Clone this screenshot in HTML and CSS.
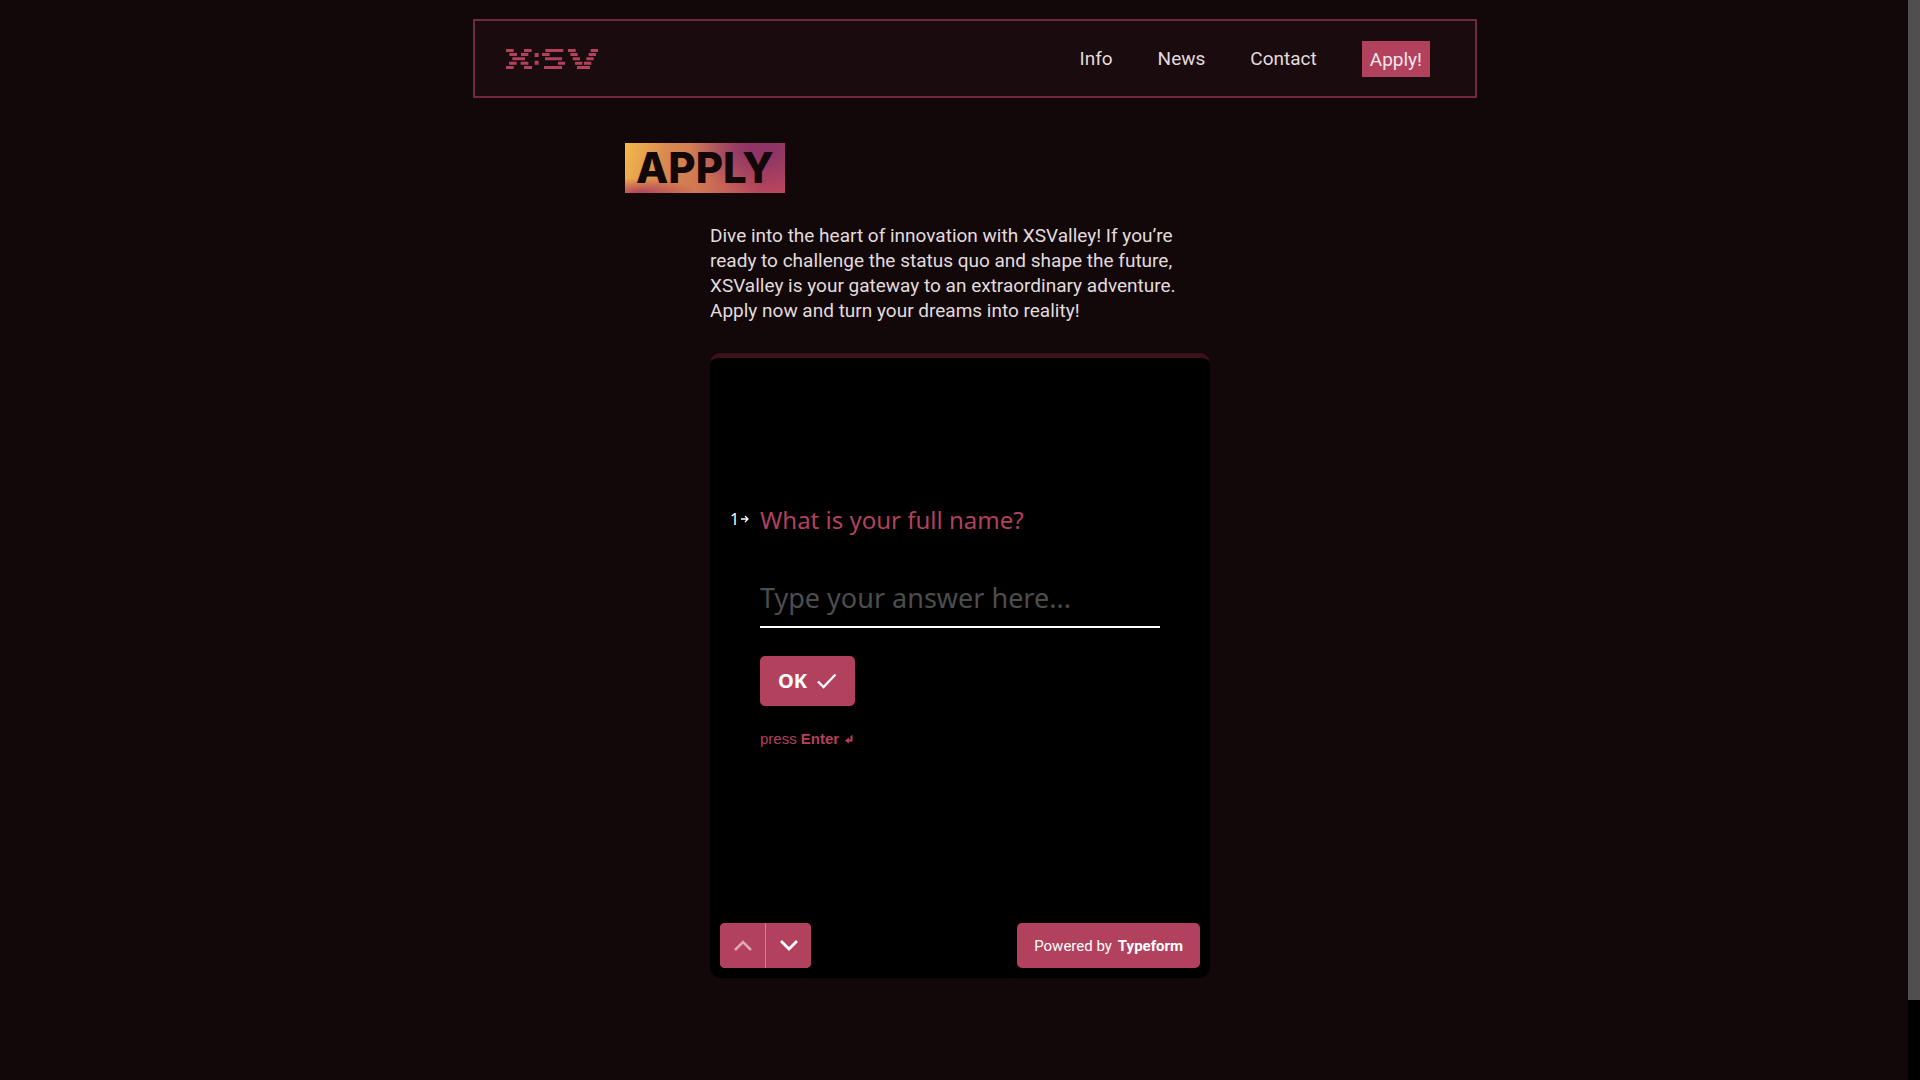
FILE: index.html
```html
<!DOCTYPE html>
<html lang="en">
<head>
<meta charset="utf-8">
<meta name="viewport" content="width=device-width, initial-scale=1">
<title>XSValley – Apply</title>
<link rel="stylesheet" href="styles.css">
</head>
<body>
<header class="site-header">
  <a class="logo" href="#" aria-label="XSValley home">
    <svg viewBox="0 0 276 60" width="92" height="20" fill="currentColor" aria-hidden="true">
      <path d="M0 0h23v9H0zM54 0h23v9H54zM10 12h23v9H10zM45 12h22v9H45zM19 25h38v9H19zM9 38h23v9H9zM44 38h23v9H44zM0 51h23v9H0zM54 51h24v9H54z"/>
      <path d="M86 12h12v12H86zM86 35h12v12H86z"/>
      <path d="M118 0h54v9h-54zM108 12h23v9h-23zM117 25h51v9h-51zM156 38h21v9h-21zM114 51h54v9h-54z"/>
      <path d="M186 0h23v9h-23zM254 0h22v9h-22zM193 12h22v9h-22zM248 12h22v9h-22zM200 25h22v9h-22zM241 25h22v9h-22zM207 38h22v9h-22zM234 38h22v9h-22zM213 51h39v9h-39z"/>
    </svg>
  </a>
  <nav class="nav">
    <a href="#info">Info</a>
    <a href="#news">News</a>
    <a href="#contact">Contact</a>
    <a class="nav-apply" href="#apply">Apply!</a>
  </nav>
</header>
<main class="content">
  <h1 class="title">APPLY</h1>
  <p class="intro">Dive into the heart of innovation with XSValley! If you’re<br>ready to challenge the status quo and shape the future,<br>XSValley is your gateway to an extraordinary adventure.<br>Apply now and turn your dreams into reality!</p>
  <form class="form-card">
    <div class="question">
      <div class="number">1<svg viewBox="0 0 8 8" width="8" height="8" fill="none" stroke="currentColor" stroke-width="1.3" aria-hidden="true"><path d="M0 4h7M4 1l3 3-3 3"/></svg></div>
      <div class="field">
        <label class="label" for="name">What is your full name?</label>
        <input class="answer" id="name" type="text" placeholder="Type your answer here...">
        <button class="ok" type="button">OK
          <svg viewBox="0 0 20 16" width="20" height="16" fill="none" stroke="currentColor" stroke-width="2.3" aria-hidden="true"><path d="M1 8.500l5.500 5.500L18.500 1.500"/></svg>
        </button>
        <p class="hint"><span>press <strong>Enter</strong></span>
          <svg viewBox="0 0 8 9" width="8" height="9" fill="currentColor" aria-hidden="true"><path d="M0 5.500L4 2.500v2h1.500V1L7.500 0v6.500H4v2z"/></svg>
        </p>
      </div>
    </div>
    <div class="form-footer">
      <div class="steps">
        <button type="button" class="step step-off" aria-label="Previous question"><svg viewBox="0 0 18 12" width="18" height="12" fill="none" stroke="currentColor" stroke-width="2.500" aria-hidden="true"><path d="M1 10l8-8 8 8"/></svg></button>
        <button type="button" class="step" aria-label="Next question"><svg viewBox="0 0 18 12" width="18" height="12" fill="none" stroke="currentColor" stroke-width="2.800" aria-hidden="true"><path d="M1 1l8 8 8-8"/></svg></button>
      </div>
      <button type="button" class="powered">Powered by <strong>Typeform</strong></button>
    </div>
  </form>
</main>
<div class="scrollbar" aria-hidden="true"><div class="thumb"></div></div>
</body>
</html>
```
FILE: styles.css
```css
* { box-sizing: border-box; }
:root {
  --bg: #120709;
  --pink: #b1415c;
  --text: #e2dcdd;
}
html { background: var(--bg); scrollbar-width: none; }
body {
  margin: 0;
  padding: 19px 0 80px;
  color: var(--text);
  font: 400 19px/25px Roboto, sans-serif;
}
button, input { font: inherit; border: 0; color: inherit; }
.site-header {
  display: flex;
  align-items: center;
  justify-content: space-between;
  width: calc(100% - 30px);
  max-width: 1004px;
  min-height: 79px;
  margin: 0 auto;
  padding: 0 45px 0 31px;
  border: 2px solid #73293c;
  background: #1a0b0e;
  position: relative;
  left: 15px;
}
.logo { display: flex; color: var(--pink); }
.nav { display: flex; align-items: center; gap: 45px; }
.nav a { color: inherit; text-decoration: none; }
.nav .nav-apply {
  padding: 6px 8px 5px;
  background: var(--pink);
  color: #f3e6e9;
}
.content {
  display: flex;
  flex-direction: column;
  align-items: center;
  width: 100%;
  max-width: 670px;
  margin: 45px auto 0;
}
.title {
  align-self: flex-start;
  margin: 0;
  padding: 0 11px;
  color: var(--bg);
  font: 800 42px/50px Inter, sans-serif;
  background:
    radial-gradient(ellipse 45% 90% at 85% 10%, #8e3566 20%, #8e356600 100%),
    radial-gradient(ellipse 35% 30% at 10% 100%, #b1415c 0, #b1415c00 100%),
    linear-gradient(105deg, #f5b94c 0, #d98a50 25%, #cf7653 50%, #b8465c 85%);
}
.intro { width: 100%; max-width: 500px; margin: 30px 0; white-space: nowrap; }
.form-card {
  display: flex;
  flex-direction: column;
  justify-content: space-between;
  width: 100%;
  max-width: 500px;
  min-height: 625px;
  padding: 144px 10px 10px;
  border-top: 5px solid #3a111c;
  border-radius: 10px;
  background: #000;
}
.question { display: flex; gap: 10px; padding: 0 40px 0 10px; }
.number {
  display: flex;
  align-items: center;
  gap: 2px;
  width: 20px;
  height: 34px;
  color: #fff;
  font: 16px/24px "Noto Sans", sans-serif;
}
.field { flex: 1; display: flex; flex-direction: column; align-items: flex-start; }
.label { color: var(--pink); font: 24px/36px "Noto Sans", sans-serif; }
.answer {
  width: 100%;
  height: 52px;
  margin-top: 38px;
  padding: 0 0 8px;
  border-bottom: 2px solid #fff;
  border-radius: 0;
  background: none;
  outline: none;
  font: 27px/40px "Noto Sans", sans-serif;
}
.answer::placeholder { color: #4d4d4d; opacity: 1; }
.ok {
  display: flex;
  align-items: center;
  gap: 10px;
  height: 50px;
  margin-top: 28px;
  padding: 0 18px;
  border-radius: 5px;
  background: var(--pink);
  color: #fff;
  font: 700 20px/28px "Noto Sans", sans-serif;
}
.hint {
  display: flex;
  align-items: center;
  gap: 6px;
  margin: 24px 0 0;
  color: var(--pink);
  font: 15px/18px "Liberation Sans", sans-serif;
}
.form-footer { display: flex; justify-content: space-between; }
.steps { display: flex; gap: 1px; border-radius: 5px; overflow: hidden; background: #cf7f92; }
.step {
  display: flex;
  align-items: center;
  justify-content: center;
  width: 45px;
  height: 45px;
  padding: 0;
  background: var(--pink);
  color: #fff;
}
.step-off { color: #dfa7b3; }
.powered {
  display: flex;
  align-items: center;
  gap: 6px;
  height: 45px;
  padding: 0 17px;
  border-radius: 5px;
  background: var(--pink);
  color: #fff;
  font: 15px/20px Roboto, sans-serif;
}
.scrollbar { position: fixed; top: 0; right: 0; bottom: 0; width: 12px; background: #000; }
.thumb { height: 92.6%; background: #4f4f4f; }
```
